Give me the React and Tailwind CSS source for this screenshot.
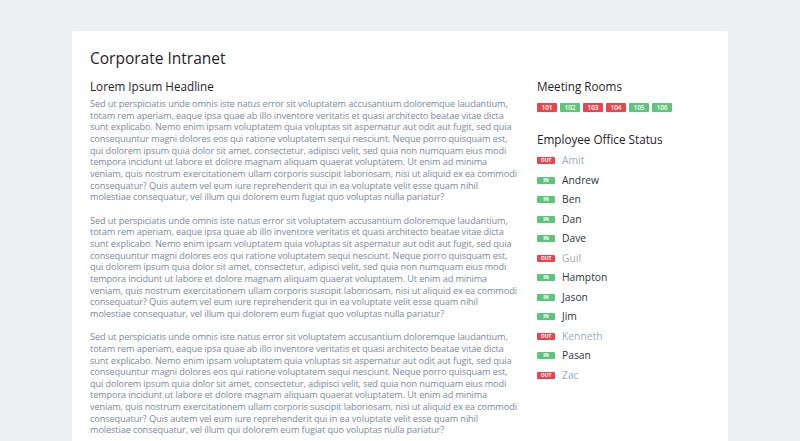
const paraLines = [
  'Sed ut perspiciatis unde omnis iste natus error sit voluptatem accusantium doloremque laudantium,',
  'totam rem aperiam, eaque ipsa quae ab illo inventore veritatis et quasi architecto beatae vitae dicta',
  'sunt explicabo. Nemo enim ipsam voluptatem quia voluptas sit aspernatur aut odit aut fugit, sed quia',
  'consequuntur magni dolores eos qui ratione voluptatem sequi nesciunt. Neque porro quisquam est,',
  'qui dolorem ipsum quia dolor sit amet, consectetur, adipisci velit, sed quia non numquam eius modi',
  'tempora incidunt ut labore et dolore magnam aliquam quaerat voluptatem. Ut enim ad minima',
  'veniam, quis nostrum exercitationem ullam corporis suscipit laboriosam, nisi ut aliquid ex ea commodi',
  'consequatur? Quis autem vel eum iure reprehenderit qui in ea voluptate velit esse quam nihil',
  'molestiae consequatur, vel illum qui dolorem eum fugiat quo voluptas nulla pariatur?',
];

const rooms = [
  { n: '101', free: false },
  { n: '102', free: true },
  { n: '103', free: false },
  { n: '104', free: false },
  { n: '105', free: true },
  { n: '106', free: true },
];

const employees = [
  { name: 'Amit', in: false },
  { name: 'Andrew', in: true },
  { name: 'Ben', in: true },
  { name: 'Dan', in: true },
  { name: 'Dave', in: true },
  { name: 'Guil', in: false },
  { name: 'Hampton', in: true },
  { name: 'Jason', in: true },
  { name: 'Jim', in: true },
  { name: 'Kenneth', in: false },
  { name: 'Pasan', in: true },
  { name: 'Zac', in: false },
];

export default function App() {
  return (
    <div
      className="h-[441px] overflow-hidden bg-[#eceef0] px-[72px] pt-[31px]"
      style={{ fontFamily: '"Open Sans", "Noto Sans", sans-serif' }}
    >
      <div className="bg-white rounded-t-[3px] pl-[18px] pr-[18px] pt-[17px] min-h-[410px]">
        <h1 className="text-[15.5px] leading-[20px] text-[#1f2329] mb-[10px]">Corporate Intranet</h1>
        <div className="flex">
          {/* main content */}
          <div className="w-[428px] shrink-0">
            <h2 className="text-[11.7px] leading-[16px] text-[#1f2329] mb-[4px]">Lorem Ipsum Headline</h2>
            {[0, 1, 2].map((i) => (
              <p
                key={i}
                className="text-[9.2px] leading-[11.65px] tracking-[-0.12px] text-[#7c8a9c] mb-[11.7px] whitespace-nowrap"
              >
                {paraLines.map((line, j) => (
                  <span key={j}>
                    {line}
                    {j < paraLines.length - 1 && <br />}
                  </span>
                ))}
              </p>
            ))}
          </div>

          {/* sidebar */}
          <div className="ml-[19px] flex-1 min-w-0">
            <h3 className="text-[11.7px] leading-[16px] text-[#1f2329]">Meeting Rooms</h3>
            <div className="flex gap-[3px] mt-[9px]">
              {rooms.map((r) => (
                <span
                  key={r.n}
                  className={`w-[20px] h-[9px] rounded-[1px] text-white text-[6.5px] leading-[9px] text-center font-semibold ${
                    r.free ? 'bg-[#5cc579]' : 'bg-[#e6444e]'
                  }`}
                >
                  {r.n}
                </span>
              ))}
            </div>

            <h3 className="text-[11.7px] leading-[16px] text-[#1f2329] mt-[19px] mb-[4px]">Employee Office Status</h3>
            <ul>
              {employees.map((e) => (
                <li key={e.name} className="flex items-center h-[19.5px]">
                  <span
                    className={`w-[18px] h-[7px] rounded-[1px] text-white text-[5px] leading-[7px] text-center font-bold ${
                      e.in ? 'bg-[#5cc579]' : 'bg-[#e6444e]'
                    }`}
                  >
                    {e.in ? 'IN' : 'OUT'}
                  </span>
                  <span className={`ml-[7px] text-[10.3px] ${e.in ? 'text-[#2b3442]' : 'text-[#a0abb8]'}`}>
                    {e.name}
                  </span>
                </li>
              ))}
            </ul>
          </div>
        </div>
      </div>
    </div>
  );
}
